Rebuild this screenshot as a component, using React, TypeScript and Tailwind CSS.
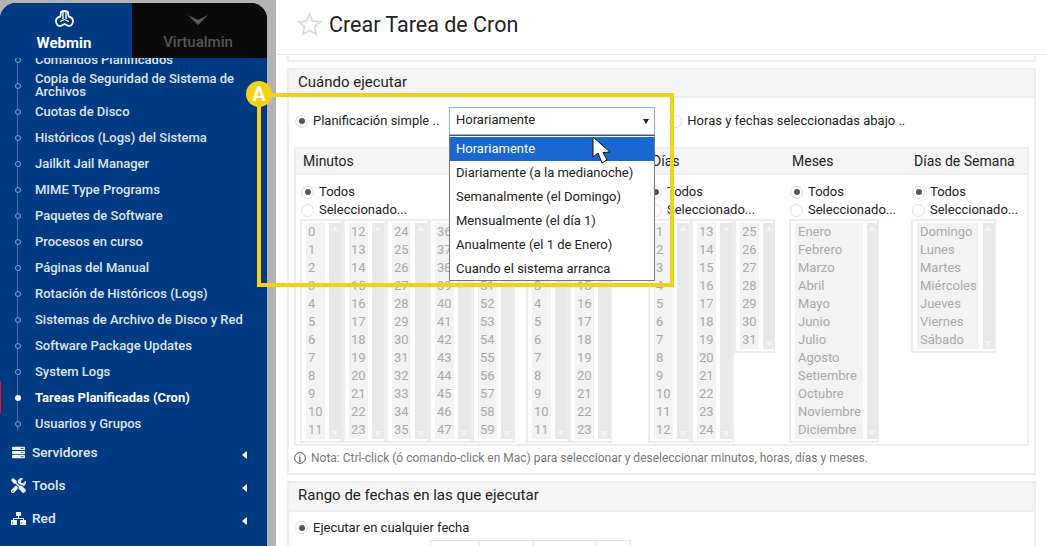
import React from "react";
import { FaServer, FaTools, FaHdd } from "react-icons/fa";

const menu: [string, boolean?][] = [
  ["Comandos Planificados"],
  ["Copia de Seguridad de Sistema de Archivos"],
  ["Cuotas de Disco"],
  ["Históricos (Logs) del Sistema"],
  ["Jailkit Jail Manager"],
  ["MIME Type Programs"],
  ["Paquetes de Software"],
  ["Procesos en curso"],
  ["Páginas del Manual"],
  ["Rotación de Históricos (Logs)"],
  ["Sistemas de Archivo de Disco y Red"],
  ["Software Package Updates"],
  ["System Logs"],
  ["Tareas Planificadas (Cron)", true],
  ["Usuarios y Grupos"],
];

const range = (a: number, b: number) => Array.from({ length: b - a + 1 }, (_, i) => String(a + i));

function Radio({ on }: { on?: boolean }) {
  return (
    <span className="flex h-[13px] w-[13px] shrink-0 items-center justify-center rounded-full border border-[#dedede] bg-white">
      {on && <span className="h-[6px] w-[6px] rounded-full bg-[#555]" />}
    </span>
  );
}

function ListBox({ items, w = 43, bar = 12, pad = 2 }: { items: string[]; w?: number; bar?: number; pad?: number }) {
  return (
    <div className="flex shrink-0 self-start border-2 border-[#ededed] bg-white pt-[2px] pb-[2px] pl-[4px] pr-[1px]" style={{ width: w }}>
      <div className="flex-1 bg-[#f3f3f3] pr-[2px] text-[13px] leading-[18px] text-[#aaaaaa]" style={{ paddingLeft: pad }}>
        {items.map((t) => (
          <div key={t} className="whitespace-nowrap">{t}</div>
        ))}
      </div>
      <div className="relative ml-[4px] shrink-0 bg-[#e9e9e9]" style={{ width: bar }}>
        <span className="absolute left-1/2 top-[3px] h-0 w-0 -translate-x-1/2 border-x-[4px] border-b-[5px] border-x-transparent border-b-[#f4f4f4]" />
        <span className="absolute bottom-[3px] left-1/2 h-0 w-0 -translate-x-1/2 border-x-[4px] border-t-[5px] border-x-transparent border-t-[#f4f4f4]" />
      </div>
    </div>
  );
}

function Pick() {
  return (
    <div className="pl-px text-[13px] leading-[18px] text-[#222]">
      <div className="flex h-[18px] items-center gap-[5px]"><Radio on /><span>Todos</span></div>
      <div className="flex h-[18px] items-center gap-[5px]"><Radio /><span className="whitespace-nowrap">Seleccionado...</span></div>
    </div>
  );
}

function NavItem({ icon, label }: { icon: React.ReactNode; label: string }) {
  return (
    <div className="flex h-[33px] shrink-0 items-center pl-[8px] pr-[20px] text-[13.7px] font-medium text-[#e4eaf3]">
      <span className="flex w-[20px] justify-center text-[#eef2f8]">{icon}</span>
      <span className="ml-[4px] pb-[1px]">{label}</span>
      <span className="ml-auto mt-[4px] h-0 w-0 border-y-[4px] border-r-[5px] border-y-transparent border-r-white" />
    </div>
  );
}

const NetworkIcon = (
  <svg width="15" height="13" viewBox="0 0 15 13" fill="currentColor">
    <rect x="5" y="0" width="5" height="4" rx="0.5" />
    <path d="M7 4 H8 V6 H13 V8 H12 V7 H3 V8 H2 V6 H7 Z" />
    <path fillRule="evenodd" d="M0 8 H6 V13 H0 Z M1 10.5 V11.5 H2 V10.5 Z M9 8 H15 V13 H9 Z M10 10.5 V11.5 H11 V10.5 Z" />
  </svg>
);

const options = [
  "Horariamente",
  "Diariamente (a la medianoche)",
  "Semanalmente (el Domingo)",
  "Mensualmente (el día 1)",
  "Anualmente (el 1 de Enero)",
  "Cuando el sistema arranca",
];

export default function App() {
  return (
    <div className="relative flex h-[546px] w-[1046px] overflow-hidden bg-[#b3b3b3] pt-[3px] [font-family:Roboto,sans-serif]">
      {/* Sidebar */}
      <aside className="flex w-[267px] shrink-0 flex-col overflow-hidden rounded-t-[16px] bg-[#003a82]">
        <div className="relative z-10 flex h-[55px] shrink-0">
          <div className="flex w-[132px] flex-col items-center bg-[#003a82] pr-[4px] pt-[7px] text-white">
            <svg width="19" height="18" viewBox="0 0 19 18" fill="none" stroke="white" strokeWidth="1.8" strokeLinejoin="round">
              <path d="M6 2 Q9.5 0 13 2 L13.5 6.5 Q18.3 7.5 18 11.5 Q17.3 16.5 13 15.8 L9.5 14 L6 15.8 Q1.7 16.5 1 11.5 Q0.7 7.5 5.5 6.5 Z" />
              <path d="M8 2 V9 M11 2 V9 M5 11.5 L9.5 9.5 L14 11.5" strokeWidth="1.3" />
            </svg>
            <span className="mt-[7px] text-[15px] font-bold leading-[17px]">Webmin</span>
          </div>
          <div className="flex flex-1 flex-col items-center bg-[#0a0a0a] pr-[3px] pt-[12px] text-[#555]">
            <svg width="20" height="10" viewBox="0 0 20 10" fill="#5a5a5a">
              <path d="M0 0 L10 5 L20 0 L10 10 Z" />
            </svg>
            <span className="mt-[9px] text-[15px] font-medium leading-[17px]">Virtualmin</span>
          </div>
        </div>
        <div className="relative -mt-[12px] shrink-0">
          <div className="absolute bottom-[5px] left-[17px] top-0 w-px bg-[#3f6aa8]" />
          {menu.map(([label, active]) => (
            <div key={label} className="relative flex h-[26px] items-center pl-[35px] pr-[20px]">
              {active ? (
                <>
                  <span className="absolute -left-px top-[-3px] h-[32px] w-[2px] bg-[#e8102a]" />
                  <span className="absolute left-[14.5px] top-[10.5px] h-[6px] w-[6px] rounded-full bg-white" />
                </>
              ) : (
                <span className="absolute left-[14.5px] top-[10.5px] h-[6px] w-[6px] rounded-full border border-[#8ea6c8] bg-[#003a82]" />
              )}
              <span className={`text-[13px] leading-[13px] ${active ? "font-bold text-white" : "font-medium text-[#dfe6f1]"}`}>{label}</span>
            </div>
          ))}
        </div>
        <div className="flex flex-col">
          <NavItem icon={<FaServer size={13} />} label="Servidores" />
          <NavItem icon={<FaTools size={15} />} label="Tools" />
          <NavItem icon={NetworkIcon} label="Red" />
          <NavItem icon={<FaHdd size={14} />} label="Hardware" />
        </div>
      </aside>

      <div className="w-[9px] shrink-0" />

      {/* Main */}
      <main className="-mt-[3px] flex min-w-0 flex-1 flex-col bg-white">
        <header className="flex h-[55px] shrink-0 items-center border-b border-[#e8e8e8] pl-[21px]">
          <svg width="25" height="24" viewBox="0 0 25 24" fill="none" stroke="#d9d9d9" strokeWidth="1.8" strokeLinejoin="miter" className="-mt-[6px]">
            <path d="M12.5 2 L15.6 9.1 L23.3 9.8 L17.5 14.9 L19.2 22.4 L12.5 18.5 L5.8 22.4 L7.5 14.9 L1.7 9.8 L9.4 9.1 Z" />
          </svg>
          <h1 className="ml-[7px] -mt-[4px] text-[21.5px] leading-[26px] text-[#222]">Crear Tarea de Cron</h1>
        </header>
        <div className="flex flex-col px-[11px] pr-[10px]">
          <div className="h-[7px] border-x-2 border-b-2 border-[#eeeeee]" />
          <section className="mt-[6px] h-[407px] shrink-0 border-2 border-[#eeeeee]">
            <div className="flex h-[28px] items-center border-b-2 border-[#eeeeee] bg-[#f5f5f5] pb-[2px] pl-[9px] text-[15px] text-[#222]">Cuándo ejecutar</div>
            <div className="flex h-[49px] items-start pl-[6px] pt-[13px] text-[13px] text-[#222]">
              <span className="flex h-[20px] items-center gap-[5px] whitespace-nowrap"><Radio on />Planificación simple ..</span>
              <span className="ml-[230px] flex h-[20px] items-center gap-[5px] whitespace-nowrap"><Radio />Horas y fechas seleccionadas abajo ..</span>
            </div>
            <div className="mx-[5px] h-[299px] border-2 border-[#eeeeee]">
              <div className="flex h-[26px] items-center border-b-2 border-[#eeeeee] bg-[#f5f5f5] pl-[4px] text-[14px] text-[#222]">
                <div className="w-[226px] pl-[3px]">Minutos</div>
                <div className="w-[122px] pl-[3px]">Horas</div>
                <div className="w-[141px] pl-[4px]">Días</div>
                <div className="w-[122px] pl-[3px]">Meses</div>
                <div className="whitespace-nowrap pl-[3px]">Días de Semana</div>
              </div>
              <div className="flex pl-[4px] pt-[8px]">
                <div className="w-[226px]">
                  <Pick />
                  <div className="flex">
                    <ListBox items={range(0, 11)} />
                    <ListBox items={range(12, 23)} />
                    <ListBox items={range(24, 35)} />
                    <ListBox items={range(36, 47)} />
                    <ListBox items={range(48, 59)} />
                  </div>
                </div>
                <div className="w-[122px]">
                  <Pick />
                  <div className="flex">
                    <ListBox items={range(0, 11)} />
                    <ListBox items={range(12, 23)} />
                  </div>
                </div>
                <div className="w-[141px]">
                  <Pick />
                  <div className="flex">
                    <ListBox items={range(1, 12)} />
                    <ListBox items={range(13, 24)} />
                    <ListBox items={range(25, 31)} w={41} />
                  </div>
                </div>
                <div className="w-[122px]">
                  <Pick />
                  <ListBox w={90} bar={11} pad={3} items={["Enero","Febrero","Marzo","Abril","Mayo","Junio","Julio","Agosto","Setiembre","Octubre","Noviembre","Diciembre"]} />
                </div>
                <div>
                  <Pick />
                  <ListBox w={85} bar={11} pad={3} items={["Domingo","Lunes","Martes","Miércoles","Jueves","Viernes","Sábado"]} />
                </div>
              </div>
            </div>
            <div className="flex h-[24px] items-center gap-[5px] pl-[5px] text-[12px] text-[#777]">
              <svg width="12" height="12" viewBox="0 0 12 12" fill="none" stroke="#444" strokeWidth="0.9">
                <circle cx="6" cy="6" r="5.4" />
                <path d="M6 5 V9.2 M5 5 H6 M5 9.2 H7.2 M6 2.6 V3.6" />
              </svg>
              <span className="whitespace-nowrap">Nota: Ctrl-click (ó comando-click en Mac) para seleccionar y deseleccionar minutos, horas, días y meses.</span>
            </div>
          </section>
          <section className="mt-[6px] border-x-2 border-t-2 border-[#eeeeee]">
            <div className="flex h-[29px] items-center border-b-2 border-[#eeeeee] bg-[#f5f5f5] pb-[2px] pl-[9px] text-[15px] text-[#222]">Rango de fechas en las que ejecutar</div>
            <div className="flex h-[28px] items-center gap-[5px] pl-[6px] pt-[3px] text-[13px] text-[#222]"><Radio on />Ejecutar en cualquier fecha</div>
            <div className="flex h-[30px] items-start pl-[6px] text-[13px] text-[#222]">
              <span className="mt-[5px] flex w-[135px] items-center gap-[5px] whitespace-nowrap"><Radio />Ejecutar en las fechas</span>
              <div className="flex h-[28px]">
                <div className="w-[50px] border border-[#e5e5e5]" />
                <div className="w-[54px] border border-l-0 border-[#e5e5e5]" />
                <div className="w-[62px] border border-l-0 border-[#e5e5e5]" />
                <div className="w-[35px] border border-l-0 border-[#e5e5e5]" />
              </div>
            </div>
          </section>
        </div>
      </main>

      {/* Open select, over the page */}
      <div className="absolute left-[449px] top-[107px] z-20 w-[206px] text-[13px] text-[#222]">
        <div className="flex h-[28px] items-center border border-[#7fb4e3] bg-white pb-[2px] pl-[6px] pr-[5px]">
          <span>Horariamente</span>
          <span className="ml-auto mt-[3px] h-0 w-0 border-x-[3.5px] border-t-[5px] border-x-transparent border-t-[#222]" />
        </div>
        <div className="h-[146px] overflow-hidden border border-[#777] border-t-[#555] bg-white pt-px">
          {options.map((o, i) => (
            <div key={o} className={`flex h-[24px] items-center whitespace-nowrap pl-[6px] ${i === 0 ? "bg-[#1a67d2] text-white" : ""}`}>{o}</div>
          ))}
        </div>
      </div>

      {/* Cursor */}
      <svg className="absolute left-[592px] top-[136px] z-30" width="20" height="29" viewBox="0 0 20 29">
        <path d="M1 1 V21 L6 17 L10 27 L15 24 L11 16.5 L18 16 Z" fill="white" stroke="#111" strokeWidth="1" strokeLinejoin="round" />
      </svg>

      {/* Annotation */}
      <div className="absolute left-[257px] top-[93px] z-30 h-[194px] w-[417px] border-4 border-[#f4d017]" />
      <div className="absolute left-[246px] top-[81px] z-30 flex h-[26px] w-[26px] items-center justify-center rounded-full bg-[#f4d017] text-[20px] font-bold text-white">A</div>
    </div>
  );
}
